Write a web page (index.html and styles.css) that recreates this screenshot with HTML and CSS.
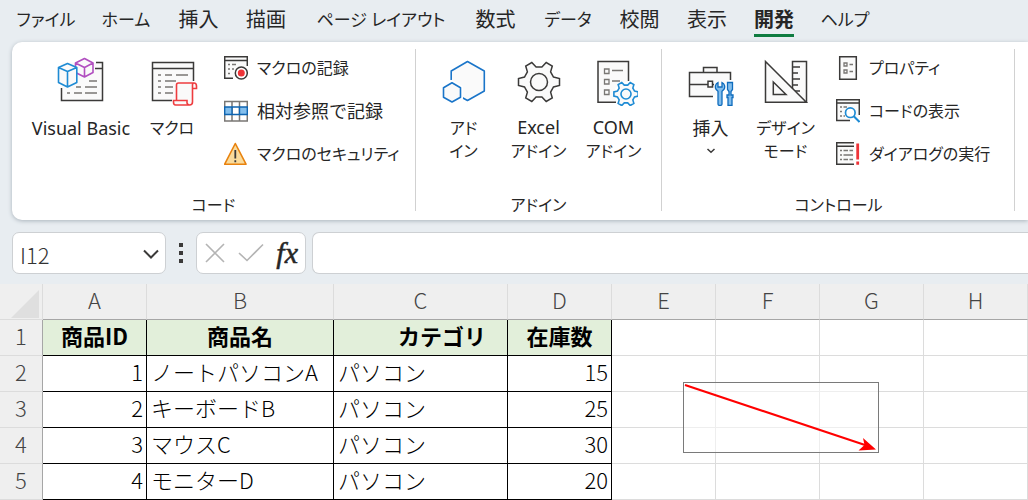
FILE: index.html
```html
<!DOCTYPE html>
<html lang="ja">
<head>
<meta charset="utf-8">
<title>在庫表</title>
<link rel="stylesheet" href="styles.css">
</head>
<body>
<svg class="defs" aria-hidden="true">
  <symbol id="gear" viewBox="-22 -22 44 44" overflow="visible">
    <path vector-effect="non-scaling-stroke" d="M14.5-5 20.5-3.5V3.5L14.5 5 11.6 10.1 13.3 16 7.2 19.5 2.9 15.1H-2.9L-7.2 19.5-13.3 16-11.6 10.1-14.5 5-20.5 3.5V-3.5L-14.5-5-11.6-10.1-13.3-16-7.2-19.5-2.9-15.1H2.9L7.2-19.5 13.3-16 11.6-10.1Z"/>
    <circle vector-effect="non-scaling-stroke" r="8.5"/>
  </symbol>
</svg>

<nav class="tabs">
  <button class="tab kana">ファイル</button>
  <button class="tab kana">ホーム</button>
  <button class="tab">挿入</button>
  <button class="tab">描画</button>
  <button class="tab kana">ページ レイアウト</button>
  <button class="tab">数式</button>
  <button class="tab kana">データ</button>
  <button class="tab">校閲</button>
  <button class="tab">表示</button>
  <button class="tab active">開発</button>
  <button class="tab kana">ヘルプ</button>
</nav>

<section class="ribbon">
  <div class="group code">
    <div class="tools">
      <button class="big wide">
        <svg class="ico" width="48" height="50" viewBox="57 56 48 50">
          <path class="pale" d="M61.500 62.500H102.500V100.500H61.500Z"/>
          <path class="ink" d="M61.500 88V100.500H102.500V62.500H96M95 68.500H102"/>
          <path class="soft" d="M89 81H97M76 87H81M85 87H97M67 93H70M74 93H82M85 93H97"/>
          <path class="cube purple" d="M84.500 58.500 93 63V72.500L84.500 77 75.500 72.500V63ZM75.500 63 84.500 67.500 93 63M84.500 67.500V77"/>
          <path class="cube blue" d="M67.500 63.500 76.800 67.500V82.500L67.500 87 58.500 82.500V67.500ZM58.500 67.500 67.500 71.500 76.800 67.500M67.500 71.500V87"/>
        </svg>
        <span class="cap">Visual Basic</span>
      </button>
      <button class="big narrow">
        <svg class="ico" width="48" height="50" viewBox="148 56 48 50" overflow="visible">
          <path class="ink pale" d="M172 100.500H152.500V62.500H193.500V81M152.500 68.500H193.500"/>
          <path class="soft" d="M158 75H161M165 75H172M176 75H188M158 81H161M165 81H176M158 87H161M165 87H173M158 93H161M165 93H173"/>
          <path class="red pale" d="M176.500 100V85Q176.500 83 178.500 83H194Q196.500 83 196.500 86V88.500H192.500V102Q192.500 105 189.500 105H175.500Q173.500 105 173.500 102V100.500H187V103Q187.500 105 189.500 105M192.500 88V85Q192.500 83 194 83"/>
        </svg>
        <span class="cap kana">マクロ</span>
      </button>
      <div class="list">
        <button class="small kana">
          <svg class="ico" width="24" height="24" viewBox="224 56 24 24">
            <path class="ink pale" d="M233 78.300H224.700V56.700H247.300V66M224.700 60.500H247.300"/>
            <path class="soft" d="M228 64.500H230M232 64.500H236M228 69H230M228 73.500H230M232 69H234"/>
            <circle class="ink white" cx="241.300" cy="73" r="6"/><circle cx="241.300" cy="73" r="3.500" fill="#ee3338"/>
          </svg>マクロの記録
        </button>
        <button class="small">
          <svg class="ico" width="24" height="24" viewBox="224 99 24 24">
            <path class="grid-ink white" d="M224.700 101.500H247.300V121H224.700ZM232 101.500V121M239.500 101.500V121"/>
            <path d="M224.500 107H232V114.500H224.500ZM239.500 107H247.500V114.500H239.500Z" fill="#83beec"/>
            <path class="deep" d="M224 107H248M224 114.500H248M224.700 107V114.500M232 107V114.500M239.500 107V114.500M247.300 107V114.500"/>
          </svg>相対参照で記録
        </button>
        <button class="small kana">
          <svg class="ico" width="24" height="24" viewBox="224 142 24 24">
            <path d="M235.300 143.500 246 164.200H224.700Z" fill="#fadb9b" stroke="#e8820e" stroke-width="1.600" stroke-linejoin="round"/>
            <path d="M235.300 150V158.500M235.300 160.300V162.300" stroke="#3b3a39" stroke-width="1.800"/>
          </svg>マクロのセキュリティ
        </button>
      </div>
    </div>
    <h2 class="group-name">コード</h2>
  </div>
  <span class="sep"></span>
  <div class="group addins">
    <div class="tools">
      <button class="big">
        <svg class="ico" width="48" height="50" viewBox="440 56 48 50">
          <path class="cube azure" d="M451.200 80V71L467.500 61.500 484.300 71V91L467.500 100.500 462 97.500"/>
          <path class="halo" d="M452 82.700 460.500 87.700V97.300L452 102 443.500 97.300V87.700Z"/>
          <path class="cube azure" d="M452 82.700 460.500 87.700V97.300L452 102 443.500 97.300V87.700Z"/>
        </svg>
        <span class="cap kana">アド<br>イン</span>
      </button>
      <button class="big">
        <svg class="ico" width="48" height="50" viewBox="515 56 48 50"><use class="ink pale" href="#gear" x="517" y="60" width="44" height="44"/></svg>
        <span class="cap kana"><span class="latin">Excel</span><br>アドイン</span>
      </button>
      <button class="big">
        <svg class="ico" width="48" height="50" viewBox="590 56 48 50">
          <path class="ink pale" d="M616 102.300H598V61.500H628.500V81"/>
          <path class="soft" d="M604.500 69H609V73.500H604.500ZM604.500 79.500H609V84H604.500ZM604.500 90H609V94.500H604.500ZM612 70.500H623M612 81H620"/>
          <circle cx="626" cy="94" r="12" fill="#fff"/>
          <use class="gear-blue" href="#gear" x="613" y="81" width="26" height="26"/>
        </svg>
        <span class="cap kana"><span class="latin">COM</span><br>アドイン</span>
      </button>
    </div>
    <h2 class="group-name">アドイン</h2>
  </div>
  <span class="sep"></span>
  <div class="group controls">
    <div class="tools">
      <button class="big">
        <svg class="ico" width="48" height="50" viewBox="687 56 48 50">
          <path class="ink pale" d="M713 96.500H689.500V72.500H730.500V80M703.500 72V67.500H717V72M689.500 84.500H708M712.500 84.500H714"/>
          <path class="ink white" d="M708 81.300H712.500V87H708Z"/>
          <path class="tool" d="M718 82.500C715.500 83.500 714.700 87 716 89.300L718 91.300V104Q718 105.500 720 105.500T722 104V91.300L724 89.300C725.500 87 724.500 83.500 722 82.500V87H718ZM727.500 82.500H732.500V89.500L731 91.500V95H733V97.500H732V105.500H728V97.500H727V95H729V91.500L727.500 89.500Z"/>
        </svg>
        <span class="cap">挿入</span>
        <svg class="arrow" width="10" height="6" viewBox="0 0 10 6"><path class="ink" d="M1.500 1 5 4.300 8.500 1"/></svg>
      </button>
      <button class="big">
        <svg class="ico" width="48" height="50" viewBox="761 56 48 50">
          <path class="ink pale" d="M791.500 61.500H805.500V102H791.500ZM791.500 67H799M791.500 73H797M791.500 79H799M791.500 85H797M791.500 91H799"/>
          <path class="ink pale" d="M764.500 61.500V102.300H805.300ZM772.300 82V94.500H785Z"/>
        </svg>
        <span class="cap kana">デザイン<br>モード</span>
      </button>
      <div class="list">
        <button class="small kana">
          <svg class="ico" width="24" height="24" viewBox="836 56 24 24">
            <path class="ink pale" d="M839.700 56.700H856.300V79.300H839.700Z"/>
            <path class="soft" d="M844 63H847V66H844ZM844 70H847V73H844ZM849.500 64.500H853M849.500 71.500H853"/>
          </svg>プロパティ
        </button>
        <button class="small kana">
          <svg class="ico" width="24" height="24" viewBox="836 99 24 24">
            <path class="ink pale" d="M850 120.500H836.700V99.700H859.300V115M836.700 103H859.300"/>
            <path class="soft" d="M840 107H842M843.500 107H847M840 111.500H842M840 116H842M843.500 116H845"/>
            <circle cx="850.300" cy="112.700" r="4.800" fill="#fff" stroke="#1e8bd4" stroke-width="1.700"/><path d="M853.800 116.300 859.500 122" stroke="#1e8bd4" stroke-width="2"/>
          </svg>コードの表示
        </button>
        <button class="small kana">
          <svg class="ico" width="24" height="24" viewBox="836 142 24 24">
            <path class="ink pale" d="M854 164.300H836.700V142.700H854M836.700 146.300H854"/>
            <path class="soft" d="M840 150.500H842M843.500 150.500H848M849.500 150.500H853M840 155H842M843.500 155H853M840 159.500H842M843.500 159.500H848M849.500 159.500H853"/>
            <path d="M857.700 143.500V159.500M857.700 161.500V164.800" stroke="#ee3338" stroke-width="2.800"/>
          </svg>ダイアログの実行
        </button>
      </div>
    </div>
    <h2 class="group-name">コントロール</h2>
  </div>
  <span class="sep"></span>
</section>

<section class="formula-bar">
  <div class="box name-box">
    <input class="cell-ref" aria-label="名前ボックス" value="I12">
    <button class="icon-btn" aria-label="名前の一覧"><svg width="16" height="10" viewBox="0 0 16 10"><path d="M1 1.500 8 8.500 15 1.500" fill="none" stroke="#3b3a39" stroke-width="2"/></svg></button>
  </div>
  <span class="grip"><i></i><i></i><i></i></span>
  <div class="box actions">
    <button class="icon-btn" aria-label="キャンセル"><svg width="20" height="20" viewBox="0 0 20 20"><path class="faint" d="M1 1 19 19M19 1 1 19"/></svg></button>
    <button class="icon-btn" aria-label="入力"><svg width="26" height="20" viewBox="0 0 26 20"><path class="faint" d="M1 10 9 17.500 25 1.500"/></svg></button>
    <button class="icon-btn fx" aria-label="関数の挿入">fx</button>
  </div>
  <input class="box formula" aria-label="数式バー">
</section>

<main class="sheet">
  <table class="grid">
    <colgroup><col class="c-num"><col class="c-std"><col class="c-name"><col class="c-cat"><col class="c-std"><col class="c-std"><col class="c-std"><col class="c-std"><col></colgroup>
    <thead>
      <tr><th class="corner"><svg width="28" height="28" viewBox="0 0 28 28"><path d="M28 0V28H0Z" fill="#dfdfdf"/></svg></th><th>A</th><th>B</th><th>C</th><th>D</th><th>E</th><th>F</th><th>G</th><th>H</th></tr>
    </thead>
    <tbody>
      <tr class="titles"><th>1</th><td class="d">商品ID</td><td class="d">商品名</td><td class="d shifted">カテゴリ</td><td class="d">在庫数</td><td></td><td></td><td></td><td></td></tr>
      <tr><th>2</th><td class="d num">1</td><td class="d">ノートパソコンA</td><td class="d">パソコン</td><td class="d num">15</td><td></td><td></td><td></td><td></td></tr>
      <tr><th>3</th><td class="d num">2</td><td class="d">キーボードB</td><td class="d">パソコン</td><td class="d num">25</td><td></td><td></td><td></td><td></td></tr>
      <tr><th>4</th><td class="d num">3</td><td class="d">マウスC</td><td class="d">パソコン</td><td class="d num">30</td><td></td><td></td><td></td><td></td></tr>
      <tr><th>5</th><td class="d num">4</td><td class="d">モニターD</td><td class="d">パソコン</td><td class="d num">20</td><td></td><td></td><td></td><td></td></tr>
    </tbody>
  </table>
  <svg class="shape" width="196" height="71" viewBox="0 0 196 71">
    <rect x="0.500" y="0.500" width="195" height="70" fill="#fff" fill-opacity="0.500" stroke="#7a7a7a"/>
    <path d="M2 3 182 63" stroke="#f00" stroke-width="2"/>
    <path d="M193 67.500 180 56 181.500 63 175.500 68.500Z" fill="#f00"/>
  </svg>
</main>
</body>
</html>
```
FILE: styles.css
```css
* { box-sizing: border-box; }

body {
  margin: 0;
  background: #e8edf1;
  color: #262626;
  font-family: "Noto Sans", "Noto Sans CJK JP", sans-serif;
  font-size: 18px;
  overflow: hidden;
}

button, input {
  font: inherit;
  color: inherit;
  background: none;
  border: 0;
  padding: 0;
  margin: 0;
}

.defs { display: none; }
.kana { font-feature-settings: "palt"; }

/* tabs */
.tabs {
  display: grid;
  grid-template-columns: 84px 76px 69px 66px 164px 65px 80px 63px 72px 62px 80px;
  padding-left: 4px;
  height: 42px;
}
.tab {
  font-size: 20px;
  line-height: 28px;
  padding: 6px 0 0;
  display: flex;
  justify-content: center;
  white-space: nowrap;
}
.tab.kana { font-size: 17px; }
.tab.active {
  font-weight: 700;
  justify-self: center;
  height: 37px;
  border-bottom: 3px solid #107c41;
}

/* ribbon */
.ribbon {
  display: flex;
  margin-left: 12px;
  height: 178px;
  background: #fff;
  border-radius: 10px 0 0 10px;
  box-shadow: 0 1px 4px #a9b3bb;
}
.group { display: flex; flex-direction: column; justify-content: space-between; padding-bottom: 2px; }
.code { width: 403px; padding-left: 10px; }
.addins { width: 245px; padding-left: 10px; }
.controls { width: 352px; padding-left: 11px; }
.sep { width: 1px; margin: 7px 0 9px; background: #d1d1d1; }
.tools { display: flex; }
.group-name { margin: 0 10px 0 0; font-size: 16px; font-weight: 400; line-height: 26px; text-align: center; font-feature-settings: "palt"; }

.big { width: 75px; padding-top: 14px; display: flex; flex-direction: column; align-items: center; }
.wide { width: 118px; }
.narrow { width: 64px; }
.cap { margin-top: 11px; line-height: 23px; white-space: nowrap; }
.cap.kana { font-size: 16px; }
.latin { font-size: 18px; line-height: 20px; }
.arrow { margin-top: 8px; }
.list { display: flex; flex-direction: column; gap: 19px; padding: 14px 0 0 20px; }
.controls .list { padding-left: 13px; }
.small { display: flex; align-items: center; gap: 9px; height: 24px; line-height: 24px; white-space: nowrap; }
.small.kana { font-size: 16px; }

/* icons */
.ico { display: block; flex: none; fill: none; }
.ink { fill: none; stroke: #3b3a39; stroke-width: 1.5; }
.pale { fill: #fafafa; }
.white { fill: #fff; }
.halo { fill: #fff; stroke: #fff; stroke-width: 5; }
.soft { fill: none; stroke: #797774; stroke-width: 1.3; }
.grid-ink { stroke: #797774; stroke-width: 1.5; }
.deep { stroke: #0f64b0; stroke-width: 1.4; }
.cube { fill: #fafafa; stroke-width: 1.6; stroke-linejoin: round; }
.purple { stroke: #b14fc0; }
.blue { stroke: #1e8bd4; }
.azure { stroke: #1a75c9; }
.red { stroke: #ee3c3f; stroke-width: 1.6; }
.gear-blue { fill: #fafafa; stroke: #1e8bd4; stroke-width: 1.6; }
.tool { fill: #83beec; stroke: #0f6cbd; stroke-width: 1.3; }
.faint { fill: none; stroke: #b4b4b4; stroke-width: 1.6; }

/* formula bar */
.formula-bar { display: flex; align-items: stretch; height: 64px; padding: 12px 0 10px 12px; }
.box { background: #fff; border: 1px solid #cdd0d3; border-radius: 7px; }
.name-box { width: 154px; display: flex; align-items: center; padding: 2px 6px 0 7px; }
.cell-ref { flex: 1; min-width: 0; font: 300 22px/30px "Noto Sans CJK JP", sans-serif; color: #333; }
.icon-btn { display: grid; place-items: center; }
.grip { width: 30px; display: flex; flex-direction: column; align-items: center; justify-content: center; gap: 4px; }
.grip i { width: 4px; height: 4px; background: #3b3a39; }
.actions { width: 110px; display: flex; align-items: center; justify-content: space-between; padding: 0 7px 0 8px; }
.fx { font: italic 400 30px/34px "Liberation Serif", serif; -webkit-text-stroke: 0.5px; }
.formula { flex: 1; min-width: 0; margin-left: 6px; border-right: 0; border-radius: 7px 0 0 7px; }

/* worksheet */
.sheet { position: relative; background: #fff; }
.grid {
  width: 100%;
  table-layout: fixed;
  border-spacing: 0;
  font-family: "Noto Sans CJK JP", sans-serif;
  font-size: 22px;
  font-weight: 300;
  line-height: 29px;
  color: #000;
}
.c-num { width: 43px; }
.c-std { width: 104px; }
.c-name { width: 187px; }
.c-cat { width: 174px; }
.grid th, .grid td {
  height: 36px;
  padding: 0 4px 4px;
  border-right: 1px solid #dcdcdc;
  border-bottom: 1px solid #dcdcdc;
  white-space: nowrap;
}
.grid th { background: #efefef; font-weight: 300; color: #444; }
.grid thead th { border-bottom-color: #a6a6a6; }
.grid tbody th { border-right-color: #a6a6a6; padding: 0 0 4px; }
.grid .corner { padding: 5px 3px 0 11px; line-height: 0; border-bottom-color: #dcdcdc; }
.grid .d { border-color: #000; }
.grid .num { text-align: right; padding-right: 3px; }
.titles .d { background: #e2efda; font-weight: 700; text-align: center; }
.grid .shifted { text-align: right; padding-right: 21px; }
.shape { position: absolute; left: 683px; top: 98px; }
```
